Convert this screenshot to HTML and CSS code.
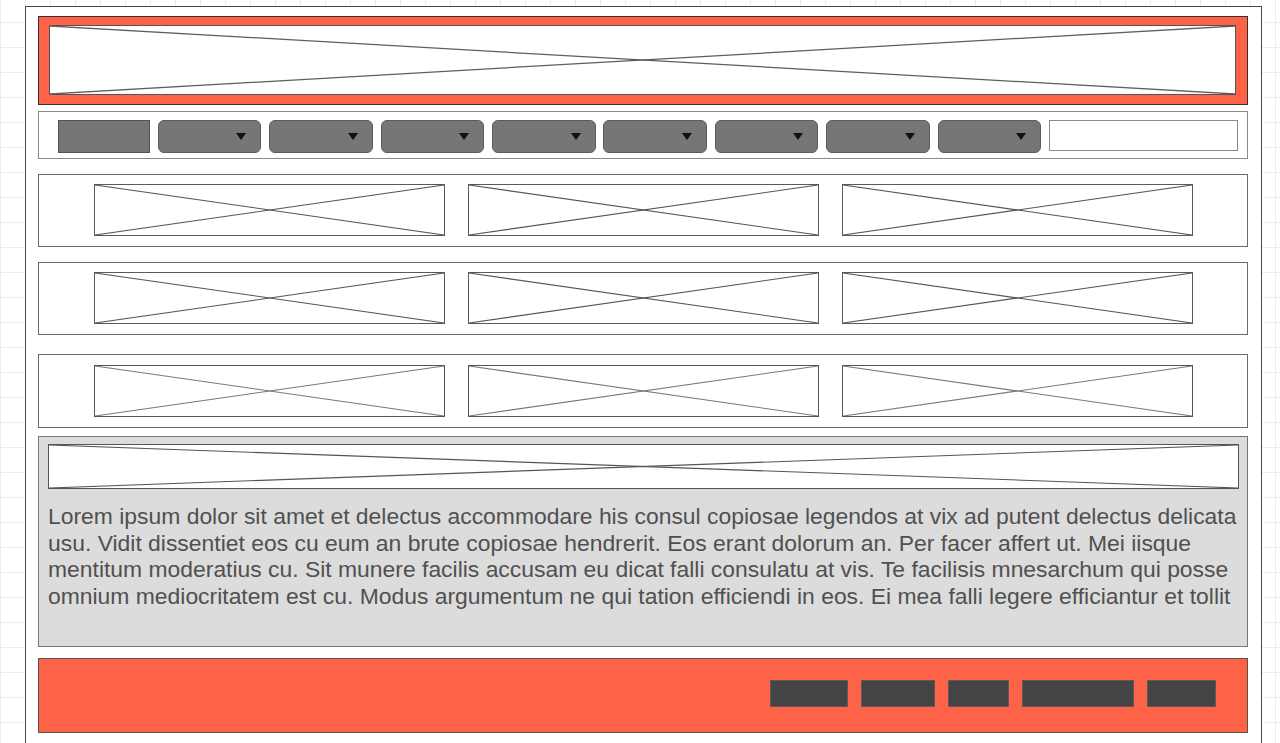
FILE: index.html
```html
<!DOCTYPE html>
<html lang="en">
<head>
<meta charset="utf-8">
<title>Wireframe</title>
<link rel="stylesheet" href="styles.css">
</head>
<body>
<div class="frame">
  <header class="header">
    <div class="ph ph-banner">
      <svg viewBox="0 0 100 100" preserveAspectRatio="none"><line x1="0" y1="0" x2="100" y2="100" vector-effect="non-scaling-stroke"/><line x1="0" y1="100" x2="100" y2="0" vector-effect="non-scaling-stroke"/></svg>
    </div>
  </header>

  <nav class="nav">
    <div class="btn-square"></div>
    <div class="dd"><span class="caret"></span></div>
    <div class="dd"><span class="caret"></span></div>
    <div class="dd"><span class="caret"></span></div>
    <div class="dd"><span class="caret"></span></div>
    <div class="dd"><span class="caret"></span></div>
    <div class="dd"><span class="caret"></span></div>
    <div class="dd"><span class="caret"></span></div>
    <div class="dd"><span class="caret"></span></div>
    <div class="search"></div>
  </nav>

  <section class="row row-first">
    <div class="ph"><svg viewBox="0 0 100 100" preserveAspectRatio="none"><line x1="0" y1="0" x2="100" y2="100" vector-effect="non-scaling-stroke"/><line x1="0" y1="100" x2="100" y2="0" vector-effect="non-scaling-stroke"/></svg></div>
    <div class="ph"><svg viewBox="0 0 100 100" preserveAspectRatio="none"><line x1="0" y1="0" x2="100" y2="100" vector-effect="non-scaling-stroke"/><line x1="0" y1="100" x2="100" y2="0" vector-effect="non-scaling-stroke"/></svg></div>
    <div class="ph"><svg viewBox="0 0 100 100" preserveAspectRatio="none"><line x1="0" y1="0" x2="100" y2="100" vector-effect="non-scaling-stroke"/><line x1="0" y1="100" x2="100" y2="0" vector-effect="non-scaling-stroke"/></svg></div>
  </section>

  <section class="row row-second">
    <div class="ph"><svg viewBox="0 0 100 100" preserveAspectRatio="none"><line x1="0" y1="0" x2="100" y2="100" vector-effect="non-scaling-stroke"/><line x1="0" y1="100" x2="100" y2="0" vector-effect="non-scaling-stroke"/></svg></div>
    <div class="ph"><svg viewBox="0 0 100 100" preserveAspectRatio="none"><line x1="0" y1="0" x2="100" y2="100" vector-effect="non-scaling-stroke"/><line x1="0" y1="100" x2="100" y2="0" vector-effect="non-scaling-stroke"/></svg></div>
    <div class="ph"><svg viewBox="0 0 100 100" preserveAspectRatio="none"><line x1="0" y1="0" x2="100" y2="100" vector-effect="non-scaling-stroke"/><line x1="0" y1="100" x2="100" y2="0" vector-effect="non-scaling-stroke"/></svg></div>
  </section>

  <section class="row row-third">
    <div class="ph ph-light"><svg viewBox="0 0 100 100" preserveAspectRatio="none"><line x1="0" y1="0" x2="100" y2="100" vector-effect="non-scaling-stroke"/><line x1="0" y1="100" x2="100" y2="0" vector-effect="non-scaling-stroke"/></svg></div>
    <div class="ph ph-light"><svg viewBox="0 0 100 100" preserveAspectRatio="none"><line x1="0" y1="0" x2="100" y2="100" vector-effect="non-scaling-stroke"/><line x1="0" y1="100" x2="100" y2="0" vector-effect="non-scaling-stroke"/></svg></div>
    <div class="ph ph-light"><svg viewBox="0 0 100 100" preserveAspectRatio="none"><line x1="0" y1="0" x2="100" y2="100" vector-effect="non-scaling-stroke"/><line x1="0" y1="100" x2="100" y2="0" vector-effect="non-scaling-stroke"/></svg></div>
  </section>

  <section class="panel">
    <div class="ph ph-strip"><svg viewBox="0 0 100 100" preserveAspectRatio="none"><line x1="0" y1="0" x2="100" y2="100" vector-effect="non-scaling-stroke"/><line x1="0" y1="100" x2="100" y2="0" vector-effect="non-scaling-stroke"/></svg></div>
    <p class="copy">Lorem ipsum dolor sit amet et delectus accommodare his consul copiosae legendos at vix ad putent delectus delicata<br>usu. Vidit dissentiet eos cu eum an brute copiosae hendrerit. Eos erant dolorum an. Per facer affert ut. Mei iisque<br>mentitum moderatius cu. Sit munere facilis accusam eu dicat falli consulatu at vis. Te facilisis mnesarchum qui posse<br>omnium mediocritatem est cu. Modus argumentum ne qui tation efficiendi in eos. Ei mea falli legere efficiantur et tollit</p>
  </section>

  <footer class="footer">
    <div class="fbtn fbtn-1"></div>
    <div class="fbtn fbtn-2"></div>
    <div class="fbtn fbtn-3"></div>
    <div class="fbtn fbtn-4"></div>
    <div class="fbtn fbtn-5"></div>
  </footer>
</div>
</body>
</html>
```

FILE: styles.css
```css
* { box-sizing: border-box; }

html, body {
  margin: 0;
  padding: 0;
  height: 743px;
  overflow: hidden;
}

body {
  background-color: #ffffff;
  background-image:
    linear-gradient(to bottom, #ececec 1px, transparent 1px),
    linear-gradient(to right, #ececec 1px, transparent 1px);
  background-size: 25px 25px;
  background-position: 0 22px, 0 0;
  font-family: "Liberation Sans", Arial, sans-serif;
}

.frame {
  margin: 6px 0 0 25px;
  width: 1237px;
  height: 760px;
  background: #ffffff;
  border: 1px solid #4a4a4a;
  padding: 9px 13px 0 12px;
  display: flex;
  flex-direction: column;
}

/* placeholder image with cross */
.ph {
  position: relative;
  background: #ffffff;
  border: 1px solid #5a5a5a;
}
.ph svg {
  display: block;
  width: 100%;
  height: 100%;
}
.ph line {
  stroke: #555555;
  stroke-width: 1.1;
}
.ph-light line { stroke: #7a7a7a; }
.ph-light { border-color: #555; }

/* header */
.header {
  height: 89px;
  background: #ff6347;
  border: 1px solid #333333;
  padding: 8px 11px 9px 10px;
  display: flex;
}
.ph-banner {
  flex: 1;
  border-color: #555;
}
.ph-banner line { stroke: #5e5e5e; stroke-width: 1.3; }

/* nav */
.nav {
  margin-top: 6px;
  height: 48px;
  border: 1px solid #8a8a8a;
  padding: 8px 9px 0 19px;
  display: flex;
  align-items: flex-start;
  justify-content: space-between;
}
.btn-square {
  width: 92px;
  height: 33px;
  background: #767676;
  border: 1px solid #555555;
}
.dd {
  position: relative;
  width: 103.5px;
  height: 33px;
  background: #767676;
  border: 1px solid #5c5c5c;
  border-radius: 6px;
}
.caret {
  position: absolute;
  right: 14px;
  top: 12px;
  width: 0;
  height: 0;
  border-left: 5px solid transparent;
  border-right: 5px solid transparent;
  border-top: 7px solid #111111;
}
.search {
  width: 189px;
  height: 31px;
  background: #ffffff;
  border: 1px solid #8a8a8a;
}

/* image rows */
.row {
  height: 73px;
  border: 1px solid #6a6a6a;
  padding: 9px 54px 10px 55px;
  display: flex;
  gap: 23px;
}
.row .ph { flex: 1; }
.row-first { margin-top: 15px; }
.row-second { margin-top: 15px; }
.row-third { margin-top: 19px; height: 74px; padding-top: 10px; }

/* text panel */
.panel {
  margin-top: 8px;
  height: 211px;
  background: #dcdcdc;
  border: 1px solid #777777;
  padding: 7px 8px 0 9px;
  display: flex;
  flex-direction: column;
}
.ph-strip {
  height: 45px;
  border-color: #555;
}
.ph-strip line { stroke: #555; }
.copy {
  margin: 14px 0 0 0;
  font-size: 22.9px;
  line-height: 26.7px;
  color: #505050;
  white-space: nowrap;
}

/* footer */
.footer {
  margin-top: 11px;
  height: 75px;
  background: #ff6347;
  border: 1px solid #555555;
  padding: 21px 31px 0 0;
  display: flex;
  justify-content: flex-end;
  align-items: flex-start;
  gap: 13px;
}
.fbtn {
  height: 27px;
  background: #444444;
  border: 1px solid #5a5a5a;
}
.fbtn-1 { width: 78px; }
.fbtn-2 { width: 74px; }
.fbtn-3 { width: 61px; }
.fbtn-4 { width: 112px; }
.fbtn-5 { width: 69px; }
```
